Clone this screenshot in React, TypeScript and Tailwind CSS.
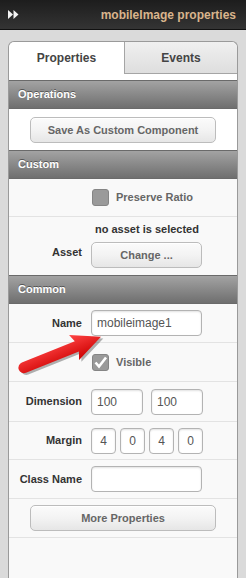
import React from 'react'

const font = { fontFamily: '"Liberation Sans", Arial, sans-serif' }

function SectionHeader({ title }: { title: string }) {
  return (
    <div className="h-[29px] flex items-center px-[9px] bg-gradient-to-b from-[#a3a3a3] to-[#6f6f6f] border-y border-[#6a6a6a] text-white text-[11px] font-bold [text-shadow:0_-1px_0_#555]">
      {title}
    </div>
  )
}

function Button({ label, className = '' }: { label: string; className?: string }) {
  return (
    <div
      className={`h-[26px] flex items-center justify-center rounded-[5px] border border-[#bcbcbc] bg-gradient-to-b from-[#fbfbfb] via-[#f3f3f3] to-[#e6e6e6] text-[11px] font-bold text-[#666] shadow-[inset_0_1px_0_#fff] ${className}`}
    >
      {label}
    </div>
  )
}

function Input({ value, className = '' }: { value?: string; className?: string }) {
  return (
    <div
      className={`h-[26px] flex items-center rounded-[4px] border border-[#b3b3b3] bg-white shadow-[inset_0_1px_2px_rgba(0,0,0,0.12)] px-[5px] text-[12px] text-[#555] ${className}`}
    >
      {value}
    </div>
  )
}

function Row({ label, children, className = '' }: { label?: string; children: React.ReactNode; className?: string }) {
  return (
    <div className={`flex items-center border-b border-[#e3e3e3] ${className}`}>
      <div className="w-[73px] text-right text-[11px] font-bold text-[#333] shrink-0">{label}</div>
      <div className="ml-[9px] flex items-center gap-[8px]">{children}</div>
    </div>
  )
}

function Checkbox({ checked }: { checked?: boolean }) {
  return (
    <div className="w-[17px] h-[17px] rounded-[3px] border border-[#858585] bg-[#9a9a9a] flex items-center justify-center">
      {checked && (
        <svg width="15" height="15" viewBox="0 0 15 15">
          <path d="M2.5 7.5 L6 11.5 L13 2.5" fill="none" stroke="#fff" strokeWidth="2.6" strokeLinejoin="miter" />
        </svg>
      )}
    </div>
  )
}

export default function App() {
  return (
    <div className="w-[246px] h-[578px] bg-[#dadada] flex flex-col overflow-hidden relative" style={font}>
      {/* title bar */}
      <div className="h-[30px] shrink-0 bg-gradient-to-b from-[#1d1d1d] to-[#343434] border-b border-[#111] flex items-center justify-between pl-[8px] pr-[10px]">
        <svg width="11" height="9" viewBox="0 0 11 9">
          <path d="M0 0 L5 4.5 L0 9 Z M5.5 0 L10.5 4.5 L5.5 9 Z" fill="#f2f2f2" />
        </svg>
        <span className="text-[12px] font-bold text-[#d9b48c]">mobileImage properties</span>
      </div>

      {/* panel */}
      <div className="mt-[11px] mx-[8px] flex-1 flex flex-col border border-b-0 border-[#9a9a9a] rounded-t-[6px] bg-[#f9f9f9]">
        {/* tabs */}
        <div className="flex h-[32px] shrink-0">
          <div className="w-[115px] flex items-center justify-center bg-white rounded-tl-[6px] text-[12px] font-bold text-[#444]">
            Properties
          </div>
          <div className="flex-1 flex items-center justify-center bg-gradient-to-b from-[#f0f0f0] to-[#dedede] border-l border-b border-[#a5a5a5] rounded-tr-[6px] text-[12px] font-bold text-[#444]">
            Events
          </div>
        </div>
        <div className="h-[6px] bg-white shrink-0" />

        <SectionHeader title="Operations" />
        <div className="px-[21px] pt-[8px] pb-[7px] bg-white">
          <Button label="Save As Custom Component" />
        </div>

        <SectionHeader title="Custom" />
        <div className="h-[38px] flex items-center border-b border-[#e3e3e3] pl-[83px] gap-[7px]">
          <Checkbox />
          <span className="text-[11px] font-bold text-[#666]">Preserve Ratio</span>
        </div>
        <div className="h-[58px] flex flex-col pt-[5px]">
          <div className="pl-[86px] text-[11px] font-bold text-[#333] leading-[14px]">no asset is selected</div>
          <div className="flex items-center mt-[6px]">
            <div className="w-[73px] text-right text-[11px] font-bold text-[#333] pb-[6px]">Asset</div>
            <Button label="Change ..." className="ml-[9px] w-[111px] h-[25px]" />
          </div>
        </div>

        <SectionHeader title="Common" />
        <Row label="Name" className="h-[39px]">
          <Input value="mobileimage1" className="w-[111px]" />
        </Row>
        <div className="h-[39px] flex items-center border-b border-[#e3e3e3] pl-[83px] gap-[7px]">
          <Checkbox checked />
          <span className="text-[11px] font-bold text-[#666]">Visible</span>
        </div>
        <Row label="Dimension" className="h-[40px]">
          <Input value="100" className="w-[52px]" />
          <Input value="100" className="w-[52px]" />
        </Row>
        <Row label="Margin" className="h-[38px]">
          <div className="flex gap-[4px]">
            {['4', '0', '4', '0'].map((v, i) => (
              <Input key={i} value={v} className="w-[25px] justify-center px-0" />
            ))}
          </div>
        </Row>
        <Row label="Class Name" className="h-[39px]">
          <Input className="w-[111px]" />
        </Row>
        <div className="h-[39px] flex items-center px-[21px] border-b border-[#e3e3e3]">
          <Button label="More Properties" className="w-full h-[25px]" />
        </div>
      </div>

      {/* red arrow annotation */}
      <svg className="absolute left-[14px] top-[322px]" width="96" height="56" viewBox="0 0 96 56">
        <defs>
          <linearGradient id="ar" x1="0" y1="0" x2="0" y2="1">
            <stop offset="0" stopColor="#ff4545" />
            <stop offset="1" stopColor="#cc0000" />
          </linearGradient>
        </defs>
        <g transform="translate(9 46) rotate(-21.8)">
          <path
            d="M1 -5.5 L58 -5.5 L55 -13.5 L84 0 L55 13.5 L58 5.5 L1 5.5 A5.5 5.5 0 0 1 1 -5.5 Z"
            fill="#000"
            opacity="0.3"
            transform="translate(1.5 2.5)"
          />
          <path
            d="M1 -5.5 L58 -5.5 L55 -13.5 L84 0 L55 13.5 L58 5.5 L1 5.5 A5.5 5.5 0 0 1 1 -5.5 Z"
            fill="url(#ar)"
          />
        </g>
      </svg>
    </div>
  )
}
